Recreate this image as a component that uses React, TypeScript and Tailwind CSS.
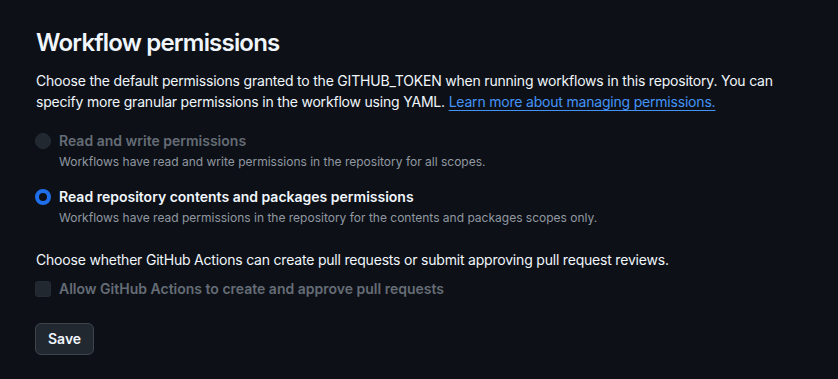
import React, { useState } from "react";

const font = { fontFamily: "Inter, 'Noto Sans', sans-serif" };

interface OptionProps {
  checked: boolean;
  disabled?: boolean;
  label: string;
  hint: string;
}

const RadioOption: React.FC<OptionProps> = ({ checked, disabled, label, hint }) => (
  <div className="flex items-start gap-2">
    <div className="pt-[2px]">
      {checked ? (
        <span className="block w-4 h-4 rounded-full border-[4px] border-[#1f6feb] bg-[#0d1117]" />
      ) : (
        <span
          className={
            disabled
              ? "block w-4 h-4 rounded-full bg-[#212830] border border-[#262c36]"
              : "block w-4 h-4 rounded-full border border-[#656c76]"
          }
        />
      )}
    </div>
    <div className="flex flex-col">
      <span
        className={
          disabled
            ? "text-sm font-semibold leading-5 text-[#656c76]"
            : "text-sm font-semibold leading-5 text-[#f0f6fc]"
        }
      >
        {label}
      </span>
      <span className="text-xs leading-5 mt-[1px] text-[#9198a1]">{hint}</span>
    </div>
  </div>
);

export default function App() {
  const [selected] = useState("read");

  return (
    <div className="w-[838px] h-[379px] bg-[#0d1117] text-[#f0f6fc]" style={font}>
      <div className="px-9 pt-[27px]">
        <h2 className="text-2xl font-semibold leading-8 tracking-[-0.8px]">Workflow permissions</h2>
        <p className="mt-[11px] text-sm leading-[21px] tracking-[-0.2px] text-[#f0f6fc]">
          Choose the default permissions granted to the GITHUB_TOKEN when running workflows in this
          repository. You can specify more granular permissions in the workflow using YAML.{" "}
          <a href="#" className="text-[#4493f8] underline decoration-1 underline-offset-[3px]">
            Learn more about managing permissions.
          </a>
        </p>

        <div className="mt-[19px] -ml-[1px] flex flex-col gap-[15px]">
          <RadioOption
            checked={selected === "write"}
            disabled
            label="Read and write permissions"
            hint="Workflows have read and write permissions in the repository for all scopes."
          />
          <RadioOption
            checked={selected === "read"}
            label="Read repository contents and packages permissions"
            hint="Workflows have read permissions in the repository for the contents and packages scopes only."
          />
        </div>

        <p className="mt-[22px] text-sm leading-5 tracking-[-0.2px]">
          Choose whether GitHub Actions can create pull requests or submit approving pull request reviews.
        </p>
        <div className="mt-[9px] -ml-[1px] flex items-center gap-2">
          <span className="block w-4 h-4 rounded-[3px] bg-[#212830] border border-[#262c36]" />
          <span className="text-sm font-semibold leading-5 text-[#656c76]">
            Allow GitHub Actions to create and approve pull requests
          </span>
        </div>

        <button className="mt-[24px] -ml-[1px] h-8 px-3 rounded-md bg-[#212830] border border-[#3d444d] text-sm font-semibold text-[#f0f6fc]">
          Save
        </button>
      </div>
    </div>
  );
}
